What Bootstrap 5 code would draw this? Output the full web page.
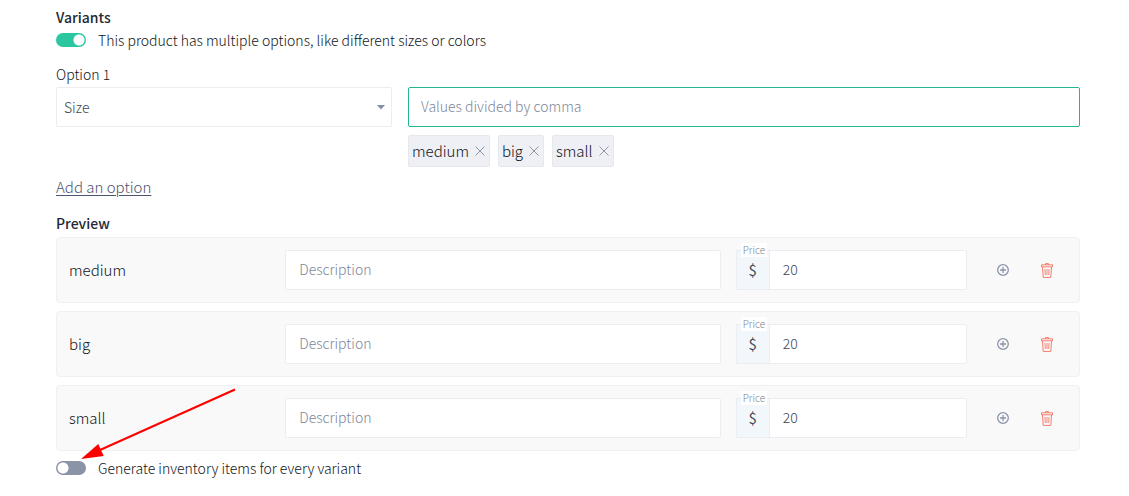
<!DOCTYPE html>
<html lang="en">
<head>
<meta charset="utf-8">
<meta name="viewport" content="width=device-width, initial-scale=1">
<title>Product variants</title>
<link href="https://cdn.jsdelivr.net/npm/bootstrap@5.3.0/dist/css/bootstrap.min.css" rel="stylesheet">
<style>
body{font-family:"Noto Sans CJK SC",sans-serif;font-weight:300;font-size:14px;line-height:20px;color:#101418;background:#fff}
.variants{padding:7px 49px 16px 56px}
.heading{font-size:14px;line-height:20px;font-weight:500;margin:0;color:#212934}
.switch-row{min-height:24px;gap:12px;padding:0;margin:1px 0 0}
.switch-row .form-check-input{width:30px;height:14px;margin:0;float:none;border:0;background-color:#8b93a6;background-size:14px 14px;background-image:radial-gradient(circle,#fff 5px,transparent 6px)!important;background-position:left center;background-repeat:no-repeat}
.switch-row .form-check-input:checked{background-color:#2bc8a0;background-position:right center}
.option-grid{display:grid;grid-template-columns:1fr 2fr;gap:0 16px;margin-top:3px}
.field{height:40px;border:1px solid #ebedf2;border-radius:2px;font-size:14px;font-weight:300;line-height:20px;padding:8px 12px 10px 13px;color:#404853}
.field::placeholder{color:#7d869a;opacity:1}
.field:focus{box-shadow:none;border-color:#26b592}
.field-active{padding-left:12px;border-color:#26b592}
.field-select{padding:8px 24px 8px 7px;background-image:url("data:image/svg+xml,%3Csvg xmlns='http://www.w3.org/2000/svg' viewBox='0 0 8 5'%3E%3Cpath fill='%238590a6' d='M0 0h8L4 4.500z'/%3E%3C/svg%3E");background-size:8px 5px;background-position:right 6px center}
.chip{height:32px;padding:0 4px 0 3px;gap:6px;background:#eff0f5;border:1px solid #e6e8ee;border-radius:2px;font-size:15px}
.chip button,.tool{border:0;background:none;padding:0;display:flex;align-items:center;justify-content:center}
.add-link{font-size:15px;line-height:24px;color:#4b5470;text-underline-offset:2px}
.add-row{margin:8px 0 14px}
.preview{margin-top:4px}
.variant{display:grid;grid-template-columns:200fr 435fr 230fr auto;gap:16px;align-items:center;padding:12px;background:#f9f9f9;border:1px solid #f0f0f3;border-radius:4px}
.variant-name{font-size:15px}
.price .input-group-text{width:34px;justify-content:center;padding:0;background:#f1f7fa;border:1px solid #ebedf2;border-radius:2px;font-size:15px;color:#404853}
.price-label{left:4px;top:-7px;z-index:6;background:#fff;color:#7d8590;font-size:10px;line-height:14px;padding:0 2px}
.tool{width:40px;height:40px}
.after{margin-top:5px}
.pointer{left:80px;top:388px;pointer-events:none}
</style>
</head>
<body>
<main class="variants position-relative">
  <h2 class="heading">Variants</h2>
  <div class="form-check form-switch switch-row d-flex align-items-center">
    <input class="form-check-input" type="checkbox" role="switch" id="multi" checked>
    <label for="multi">This product has multiple options, like different sizes or colors</label>
  </div>

  <label class="d-block mt-2 pt-1" for="optionName">Option 1</label>
  <div class="option-grid">
    <div>
      <select class="form-select field field-select" id="optionName"><option>Size</option><option>Color</option></select>
    </div>
    <div>
      <input class="form-control field field-active" type="text" placeholder="Values divided by comma" aria-label="Option values">
      <div class="d-flex flex-wrap gap-2 mt-2">
        <span class="chip d-flex align-items-center">medium<button type="button" aria-label="Remove medium"><svg width="10" height="10" viewBox="0 0 10 10" stroke="#9196ac" fill="none"><path d="M.5.5l9 9M9.500.5l-9 9"/></svg></button></span>
        <span class="chip d-flex align-items-center">big<button type="button" aria-label="Remove big"><svg width="10" height="10" viewBox="0 0 10 10" stroke="#9196ac" fill="none"><path d="M.5.5l9 9M9.500.5l-9 9"/></svg></button></span>
        <span class="chip d-flex align-items-center">small<button type="button" aria-label="Remove small"><svg width="10" height="10" viewBox="0 0 10 10" stroke="#9196ac" fill="none"><path d="M.5.5l9 9M9.500.5l-9 9"/></svg></button></span>
      </div>
    </div>
  </div>

  <div class="add-row d-flex"><a class="add-link" href="#">Add an option</a></div>

  <h2 class="heading">Preview</h2>
  <svg class="d-none">
    <symbol id="plus" viewBox="0 0 12 12"><g fill="none" stroke="#8b93ab"><circle cx="6" cy="6" r="5.300" stroke-width="1.300"/><path d="M6 3v6M3 6h6" stroke-width="1.300"/></g></symbol>
    <symbol id="trash" viewBox="0 0 12 15"><g fill="none" stroke="#f47c6c"><path d="M4.500 1.800V.6h3v1.200M.5 1.800h11v2H.5zM1.500 4l.7 10.400h7.600L10.500 4"/><path d="M4 6l.3 6M6 6v6M8 6l-.3 6" stroke-width=".9"/></g></symbol>
  </svg>
  <div class="preview d-grid gap-2">
    <div class="variant">
      <span class="variant-name">medium</span>
      <input class="form-control field" type="text" placeholder="Description" aria-label="Description of medium">
      <div class="input-group price">
        <label class="price-label position-absolute" for="price1">Price</label>
        <span class="input-group-text">$</span>
        <input class="form-control field" type="text" id="price1" value="20">
      </div>
      <div class="d-flex gap-1">
        <button class="tool" type="button" aria-label="Add details"><svg width="12" height="12"><use href="#plus"/></svg></button>
        <button class="tool" type="button" aria-label="Delete medium"><svg width="12" height="15"><use href="#trash"/></svg></button>
      </div>
    </div>
    <div class="variant">
      <span class="variant-name">big</span>
      <input class="form-control field" type="text" placeholder="Description" aria-label="Description of big">
      <div class="input-group price">
        <label class="price-label position-absolute" for="price2">Price</label>
        <span class="input-group-text">$</span>
        <input class="form-control field" type="text" id="price2" value="20">
      </div>
      <div class="d-flex gap-1">
        <button class="tool" type="button" aria-label="Add details"><svg width="12" height="12"><use href="#plus"/></svg></button>
        <button class="tool" type="button" aria-label="Delete big"><svg width="12" height="15"><use href="#trash"/></svg></button>
      </div>
    </div>
    <div class="variant">
      <span class="variant-name">small</span>
      <input class="form-control field" type="text" placeholder="Description" aria-label="Description of small">
      <div class="input-group price">
        <label class="price-label position-absolute" for="price3">Price</label>
        <span class="input-group-text">$</span>
        <input class="form-control field" type="text" id="price3" value="20">
      </div>
      <div class="d-flex gap-1">
        <button class="tool" type="button" aria-label="Add details"><svg width="12" height="12"><use href="#plus"/></svg></button>
        <button class="tool" type="button" aria-label="Delete small"><svg width="12" height="15"><use href="#trash"/></svg></button>
      </div>
    </div>
  </div>

  <div class="form-check form-switch switch-row after d-flex align-items-center">
    <input class="form-check-input" type="checkbox" role="switch" id="inventory">
    <label for="inventory">Generate inventory items for every variant</label>
  </div>

  <svg class="pointer position-absolute" width="158" height="74" viewBox="0 0 158 74" aria-hidden="true">
    <path d="M155 1.500L20 62" stroke="#f00" stroke-width="2" fill="none"/><path d="M1 71L18.300 56L23.700 68z" fill="#f00"/>
  </svg>
</main>
<script src="https://cdn.jsdelivr.net/npm/bootstrap@5.3.0/dist/js/bootstrap.bundle.min.js"></script>
</body>
</html>
